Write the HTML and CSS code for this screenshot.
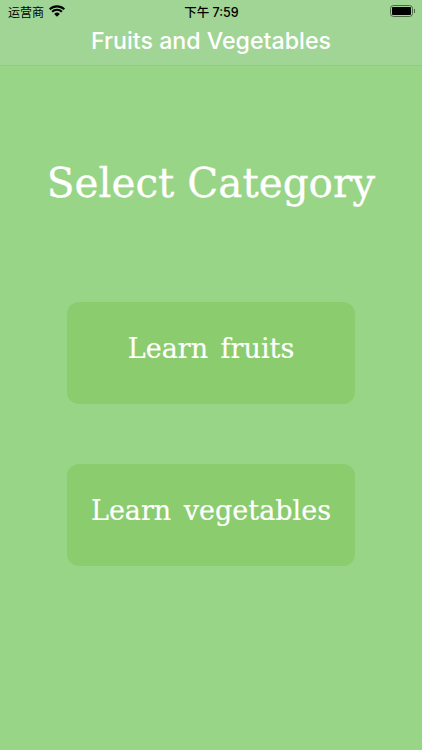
FILE: index.html
```html
<!DOCTYPE html>
<html lang="zh-CN">
<head>
    <meta charset="UTF-8">
    <meta name="viewport" content="width=device-width, initial-scale=1.0">
    <title>Fruits and Vegetables</title>
    <link rel="stylesheet" href="styles.css">
</head>

<body>
<div class="screen">
    <div class="top-bar">
        <div class="status-bar">
            <div class="status-left">
                <span class="carrier">运营商</span>
                <svg class="wifi" viewBox="0 0 16 12" width="16" height="12">
                    <path d="M8 11.8 5.2 8.9a4 4 0 0 1 5.6 0z" fill="#000"/>
                    <path d="M3.8 7.5a6.2 6.2 0 0 1 8.4 0l1.4-1.5a8.2 8.2 0 0 0-11.2 0z" fill="#000"/>
                    <path d="M1.4 5a9.7 9.7 0 0 1 13.2 0l1.4-1.5a11.8 11.8 0 0 0-16 0z" fill="#000"/>
                </svg>
            </div>
            <div class="clock">下午 7:59</div>
            <div class="battery">
                <div class="battery-body"><div class="battery-level"></div></div>
                <div class="battery-cap"></div>
            </div>
        </div>
        <div class="nav-title">Fruits and Vegetables</div>
    </div>

    <div class="content">
        <h1>Select Category</h1>
        <div class="menu">
            <div class="menu-button">Learn fruits</div>
            <div class="menu-button">Learn vegetables</div>
        </div>
    </div>
</div>
</body>
</html>
```

FILE: styles.css
```css
* {
    box-sizing: border-box;
    margin: 0;
    padding: 0;
}

body {
    font-family: Inter, Roboto, sans-serif;
    background-color: #98d587;
}

.screen {
    width: 422px;
    height: 750px;
    overflow: hidden;
}

.top-bar {
    height: 66px;
    background: #a1d595;
    border-bottom: 1px solid #90cb80;
}

.status-bar {
    height: 22px;
    padding: 0 7px 0 8px;
    display: grid;
    grid-template-columns: 1fr auto 1fr;
    align-items: center;
    color: #000;
}

.status-left {
    display: flex;
    align-items: center;
    gap: 5px;
}

.carrier {
    font-family: "Noto Sans CJK SC", sans-serif;
    font-size: 12px;
}

.clock {
    font-family: Inter, "Noto Sans CJK SC", sans-serif;
    font-size: 12.5px;
    font-weight: 500;
}

.battery {
    display: flex;
    align-items: center;
    justify-content: flex-end;
    gap: 1px;
}

.battery-body {
    width: 23px;
    height: 12px;
    border: 1px solid #4a6a42;
    border-radius: 3.5px;
    padding: 1px;
}

.battery-level {
    height: 100%;
    background: #000;
    border-radius: 1px;
}

.battery-cap {
    width: 1px;
    height: 4px;
    background: #4a6a42;
}

.nav-title {
    text-align: center;
    color: white;
    font-size: 23.2px;
    font-weight: 500;
    line-height: 38px;
}

.content {
    display: flex;
    flex-direction: column;
    align-items: center;
}

h1 {
    margin-top: 91px;
    font-family: "DejaVu Serif", serif;
    font-size: 40.5px;
    font-weight: 400;
    line-height: 52px;
    color: white;
    -webkit-text-stroke: 0.3px white;
}

.menu {
    margin-top: 93px;
    display: flex;
    flex-direction: column;
    gap: 60px;
}

.menu-button {
    width: 288px;
    height: 102px;
    padding-bottom: 10px;
    background: #8bcc6e;
    border-radius: 12px;
    display: flex;
    align-items: center;
    justify-content: center;
    font-family: "DejaVu Serif", serif;
    font-size: 27px;
    word-spacing: 4px;
    color: white;
    -webkit-text-stroke: 0.2px white;
}
```
